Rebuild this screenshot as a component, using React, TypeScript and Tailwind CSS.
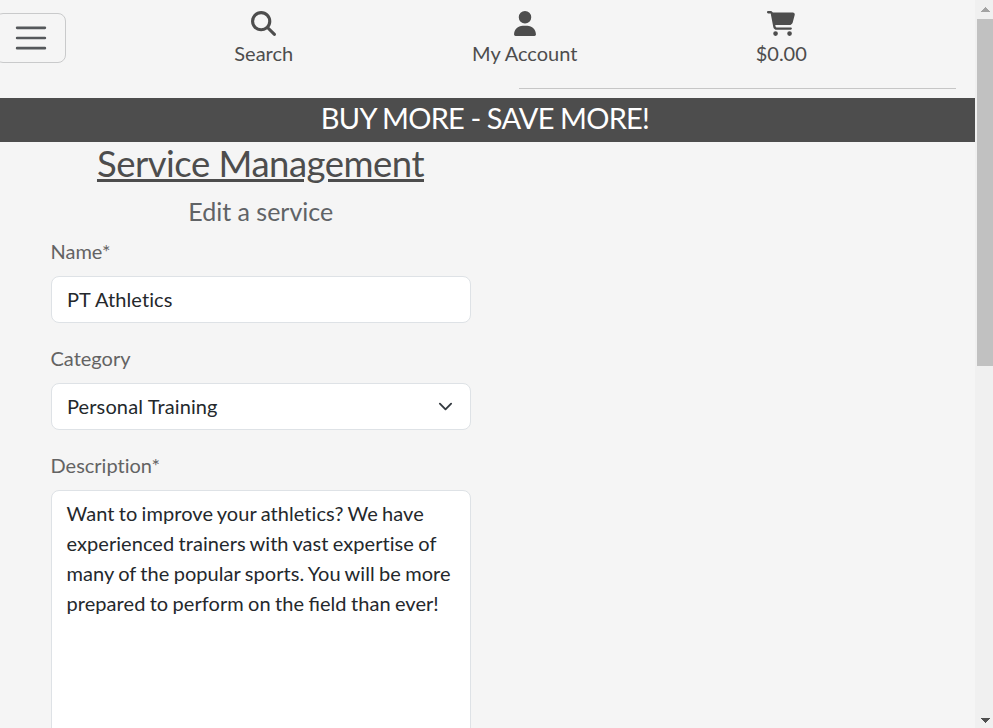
import type { ReactNode } from "react";
import { FaCartShopping, FaMagnifyingGlass, FaUser } from "react-icons/fa6";

function NavItem({ icon, label, className }: { icon: ReactNode; label: string; className: string }) {
  return (
    <a className={`flex flex-col items-center pt-[11px] text-[#4d4d4d] ${className}`}>
      {icon}
      <span className="mt-[2px] whitespace-nowrap leading-[30px]">{label}</span>
    </a>
  );
}

function Header() {
  return (
    <header className="flex h-[98px] flex-col">
      <div className="flex h-[88px] items-start">
        <button
          type="button"
          aria-label="Menu"
          className="-ml-[5px] mt-[13px] flex h-[50px] w-[71px] items-center justify-center rounded-[8px] border border-[#c9cacb]"
        >
          <svg viewBox="0 0 30 30" className="h-[38px] w-[38px]" fill="none" stroke="#55585b" strokeWidth="2" strokeLinecap="round">
            <path d="M4 7h22M4 15h22M4 23h22" />
          </svg>
        </button>
        <NavItem className="ml-[138px] w-[119.5px]" label="Search" icon={<FaMagnifyingGlass className="h-[25px] w-[25px]" />} />
        <NavItem className="ml-[131.5px] w-[139.5px]" label="My Account" icon={<FaUser className="h-[25px] w-[22px]" />} />
        <NavItem className="ml-[126.5px] w-[120.5px]" label="$0.00" icon={<FaCartShopping className="h-[25px] w-[28px]" />} />
      </div>
      <hr className="ml-[519px] w-[437px] border-[#c6c6c6]" />
    </header>
  );
}

function Scrollbar() {
  return (
    <div className="flex h-full w-[18px] shrink-0 flex-col items-end bg-[#f0f0f0]">
      <div className="flex h-[19px] w-full items-start justify-center pl-[3px] pt-[7px]">
        <svg width="9" height="5" viewBox="0 0 9 5" fill="#a3a3a3" shapeRendering="crispEdges">
          <path d="M4 0h1v1h1v1h1v1h1v1h1v1H0V4h1V3h1V2h1V1h1z" />
        </svg>
      </div>
      <div className="h-[347px] w-[16px] bg-[#c1c1c1]" />
      <div className="mt-auto flex h-[10px] w-full items-start justify-center pl-[3px]">
        <svg width="9" height="5" viewBox="0 0 9 5" fill="#505050" shapeRendering="crispEdges">
          <path d="M0 0h9v1H8v1H7v1H6v1H5v1H4V4H3V3H2V2H1V1H0z" />
        </svg>
      </div>
    </div>
  );
}

function Label({ children }: { children: ReactNode }) {
  return <label className="-ml-[0.5px] mb-[10px] block h-[30px] leading-[30px] text-[#636363]">{children}</label>;
}

const field = "w-full rounded-[8px] border border-[#dee2e6] bg-white px-[15px] text-[#24282c]";

export default function App() {
  return (
    <div className="flex h-[728px] w-[993px] overflow-hidden bg-[#f5f5f5] font-['Lato',sans-serif] text-[20px] [font-variant-ligatures:no-common-ligatures]">
      <div className="h-full w-[975px] overflow-hidden">
        <Header />
        <div className="h-[44px] bg-[#4d4d4d] pr-[5px] text-center text-[29px] leading-[40px] tracking-[-0.75px] [word-spacing:-0.3px] text-white">
          BUY MORE - SAVE MORE!
        </div>
        <main className="ml-[51px] w-[420px]">
          <h1 className="h-[45px] whitespace-nowrap pr-[1px] text-center text-[36.5px] leading-[42px] tracking-[-0.5px] text-[#4d4d4d] underline">
            Service Management
          </h1>
          <h2 className="mt-[9px] h-[30px] pr-[0.5px] text-center text-[25px] leading-[30px] text-[#606366]">Edit a service</h2>
          <div className="mt-[10px]">
            <Label>Name*</Label>
            <div className={`${field} flex h-[47px] items-center pb-[2px] tracking-[0.1px]`}>PT Athletics</div>
          </div>
          <div className="mt-[20px]">
            <Label>Category</Label>
            <div className={`${field} flex h-[47px] items-center justify-between`}>
              <span className="pb-[2px] tracking-[0.12px]">Personal Training</span>
              <svg viewBox="0 0 16 16" className="mr-[2.5px] h-[15px] w-[15px]" fill="none" stroke="#343a40" strokeWidth="2" strokeLinecap="round" strokeLinejoin="round">
                <path d="m2 5 6 6 6-6" />
              </svg>
            </div>
          </div>
          <div className="mt-[20px]">
            <Label>Description*</Label>
            <div className={`${field} h-[300px] pl-[14.5px] pt-[7px] leading-[30px] tracking-[0.06px] [word-spacing:-0.9px]`}>
              <p>
                Want to improve your athletics? We have experienced trainers with vast expertise of many of the popular
                sports. You will be more
              </p>
              <p className="flex gap-[4.5px] whitespace-nowrap">
                <span>prepared to perform on the</span>
                <span className="tracking-normal [font-variant-ligatures:normal]">field</span>
                <span>than ever!</span>
              </p>
            </div>
          </div>
        </main>
      </div>
      <Scrollbar />
    </div>
  );
}
